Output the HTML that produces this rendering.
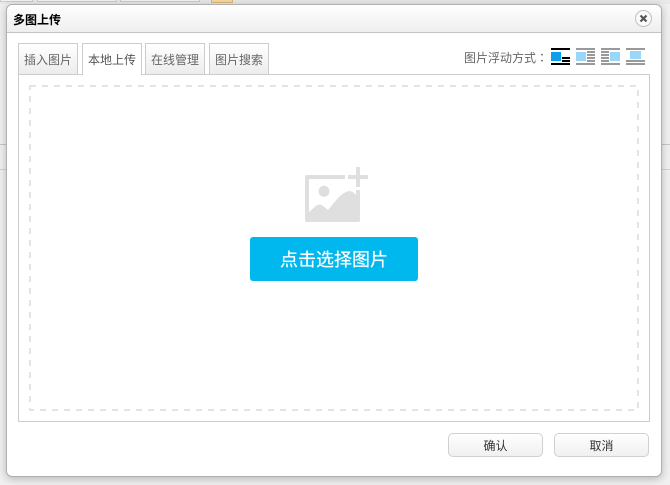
<!DOCTYPE html>
<html><head><meta charset="utf-8"><style>
html,body{margin:0;padding:0;width:670px;height:485px;overflow:hidden;background:#f1f1f1;font-family:"Liberation Sans","Noto Sans CJK SC",sans-serif}
div,span{position:absolute;box-sizing:border-box}
.dlg{left:6px;top:4px;width:656px;height:473px;background:#fff;border:1px solid #b0b0b0;border-radius:6px;box-shadow:0 2px 9px rgba(0,0,0,.25)}
.title{left:0;top:0;width:654px;height:28px;background:linear-gradient(#fff,#eee);border-bottom:1px solid #c4c4c4;border-radius:6px 6px 0 0}
.tab{top:43px;width:60px;height:31px;border:1px solid #ccc;border-bottom:none;background:linear-gradient(#fff,#ececec);font-size:12px;line-height:32px;color:#666;text-align:center}
.tab.on{background:#fff;height:32px;z-index:2;color:#555}
.btn{top:433px;width:95px;height:24px;border:1px solid #d0d0d0;border-radius:5px;background:linear-gradient(#fff,#f0f0f0);font-size:12px;line-height:24px;color:#333;text-align:center}
.b{position:absolute}
</style></head><body>
<div style="left:0;top:0;width:670px;height:4px;background:#e9e9e9"></div>
<div style="left:0;top:0;width:33px;height:2px;background:#f4f4f4;border:1px solid #ccc;border-top:none"></div>
<div style="left:37px;top:0;width:80px;height:2px;background:#f4f4f4;border:1px solid #ccc;border-top:none"></div>
<div style="left:120px;top:0;width:80px;height:2px;background:#f4f4f4;border:1px solid #ccc;border-top:none"></div>
<div style="left:211px;top:0;width:22px;height:3px;background:#f5d9a4;border:1px solid #dcb878;border-top:none"></div>
<div style="left:0;top:144px;width:670px;height:1px;background:#c8c8c8"></div>
<div style="left:0;top:169px;width:670px;height:1px;background:#d4d4d4"></div>
<div class="dlg"><div class="title"></div></div>
<div style="left:13px;top:11px;font-size:12px;line-height:18px;font-weight:bold;color:#000;white-space:nowrap">多图上传</div>
<svg class="b" style="left:634px;top:9px" width="19" height="19" viewBox="0 0 19 19"><circle cx="9.5" cy="9.500" r="8" fill="#fafafa" stroke="#c0c0c0"/><path d="M6.500 6.500L12.500 12.500M12.500 6.500L6.500 12.500" stroke="#555" stroke-width="2.2"/></svg>
<div class="tab" style="left:18px">插入图片</div>
<div class="tab on" style="left:82px">本地上传</div>
<div class="tab" style="left:145px">在线管理</div>
<div class="tab" style="left:209px">图片搜索</div>
<div style="left:464px;top:50px;font-size:12px;line-height:17px;color:#666;white-space:nowrap">图片浮动方式<span style="position:static;font-family:'Liberation Sans','Noto Sans CJK TC',sans-serif">：</span></div>
<svg class="b" style="left:551px;top:48px" width="100" height="17" viewBox="0 0 100 17">
<g fill="#000"><rect width="19" height="2"/><rect y="15" width="19" height="2"/><rect x="11" y="9" width="8" height="2"/><rect x="11" y="12" width="8" height="2"/></g><rect y="4" width="10" height="9" fill="#0d9fea"/>
<g fill="#999"><rect x="25" width="19" height="2"/><rect x="25" y="15" width="19" height="2"/><rect x="36" y="3" width="8" height="2"/><rect x="36" y="6" width="8" height="2"/><rect x="36" y="9" width="8" height="2"/><rect x="36" y="12" width="8" height="2"/></g><rect x="25" y="4" width="10" height="9" fill="#9bd6f8"/>
<g fill="#999"><rect x="50" width="19" height="2"/><rect x="50" y="15" width="19" height="2"/><rect x="50" y="3" width="8" height="2"/><rect x="50" y="6" width="8" height="2"/><rect x="50" y="9" width="8" height="2"/><rect x="50" y="12" width="8" height="2"/></g><rect x="59" y="4" width="10" height="9" fill="#9bd6f8"/>
<g fill="#999"><rect x="75" width="19" height="2"/><rect x="75" y="12" width="19" height="2"/><rect x="75" y="15" width="19" height="2"/></g><rect x="79" y="3" width="11" height="8" fill="#9bd6f8"/>
</svg>
<div style="left:18px;top:74px;width:632px;height:348px;border:1px solid #ccc;background:#fff"></div>
<svg class="b" style="left:28px;top:84px" width="612" height="328" viewBox="0 0 612 328"><rect x="2" y="2" width="608" height="324" fill="none" stroke="#e4e4e4" stroke-width="2" stroke-dasharray="6 6"/></svg>
<svg class="b" style="left:300px;top:162px" width="75" height="65" viewBox="0 0 75 65">
<path fill="#dfdfdf" d="M7 13H45V17H9V50L16 44Q20 41 23 44L28 48L38 36Q45 29 50 29Q54 30 56 33V28H60V58Q60 60 58 60H7Q5 60 5 58V15Q5 13 7 13Z"/>
<circle cx="24" cy="29.300" r="5.500" fill="#dfdfdf"/>
<path fill="#dfdfdf" d="M56 5H60V13H68V17H60V25H56V17H48V13H56Z"/>
</svg>
<div style="left:250px;top:237px;width:168px;height:44px;background:#00b7ee;border-radius:3px;color:#fff;font-size:18px;line-height:46px;text-align:center;text-shadow:0 0 .6px #fff">点击选择图片</div>
<div class="btn" style="left:448px">确认</div>
<div class="btn" style="left:554px">取消</div>
</body></html>
